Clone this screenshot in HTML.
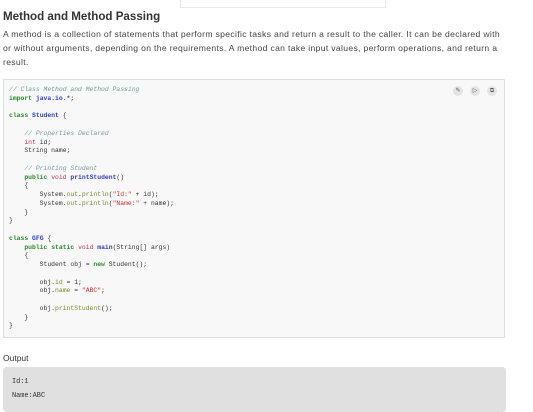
<!DOCTYPE html>
<html><head><style>
body{margin:0;width:533px;height:407px;overflow:hidden;background:#fff;font-family:"Liberation Sans",sans-serif;position:relative}
.top{position:absolute;left:180px;top:-1px;width:204px;height:8px;border:1px solid #e6e6e6;border-top:none}
h1{position:absolute;left:3px;top:10px;margin:0;font-size:11.6px;font-weight:bold;color:#333}
p{position:absolute;left:3px;top:27px;width:503px;margin:0;font-size:8.6px;letter-spacing:0.33px;line-height:14px;color:#444}
.code{position:absolute;left:3px;top:79px;width:500px;height:257px;background:#f8f8f8;border:1px solid #dcdcdc;box-sizing:content-box}
pre{margin:0;position:absolute;left:5px;top:6px;font-family:"Liberation Mono",monospace;font-size:6.4px;line-height:8.75px;color:#333}
.c{color:#7a9a9a;font-style:italic}.k{color:#2a8a2a;font-weight:bold}.t{color:#c03060}.f{color:#3040c0;font-weight:bold}.s{color:#d03030}.m{color:#7a8a30}
.ic{position:absolute;top:6px;width:10px;height:10px;border-radius:50%;background:#e4e4e4;font-size:6px;color:#555;text-align:center;line-height:10px}
.ol{position:absolute;left:3px;top:353px;font-size:8.5px;color:#333}
.out{position:absolute;left:3px;top:367px;width:503px;height:45px;background:#e0e0e0;border-radius:4px}
.out pre{left:9px;top:8px;font-size:6.9px;line-height:14px;color:#333}
</style></head><body>
<div class="top"></div>
<h1>Method and Method Passing</h1>
<p>A method is a collection of statements that perform specific tasks and return a result to the caller. It can be declared with or without arguments, depending on the requirements. A method can take input values, perform operations, and return a result.</p>
<div class="code">
<div class="ic" style="left:449px">✎</div><div class="ic" style="left:466px">▷</div><div class="ic" style="left:483px">⧉</div>
<pre><span class="c">// Class Method and Method Passing</span>
<span class="k">import</span> <span class="f">java.io.*</span>;

<span class="k">class</span> <span class="f">Student</span> {

    <span class="c">// Properties Declared</span>
    <span class="t">int</span> id;
    String name;

    <span class="c">// Printing Student</span>
    <span class="k">public</span> <span class="t">void</span> <span class="f">printStudent</span>()
    {
        System.<span class="m">out</span>.<span class="m">println</span>(<span class="s">"Id:"</span> + id);
        System.<span class="m">out</span>.<span class="m">println</span>(<span class="s">"Name:"</span> + name);
    }
}

<span class="k">class</span> <span class="f">GFG</span> {
    <span class="k">public</span> <span class="k">static</span> <span class="t">void</span> <span class="f">main</span>(String[] args)
    {
        Student obj = <span class="k">new</span> Student();

        obj.<span class="m">id</span> = 1;
        obj.<span class="m">name</span> = <span class="s">"ABC"</span>;

        obj.<span class="m">printStudent</span>();
    }
}</pre>
</div>
<div class="ol">Output</div>
<div class="out"><pre>Id:1
Name:ABC</pre></div>
</body></html>
